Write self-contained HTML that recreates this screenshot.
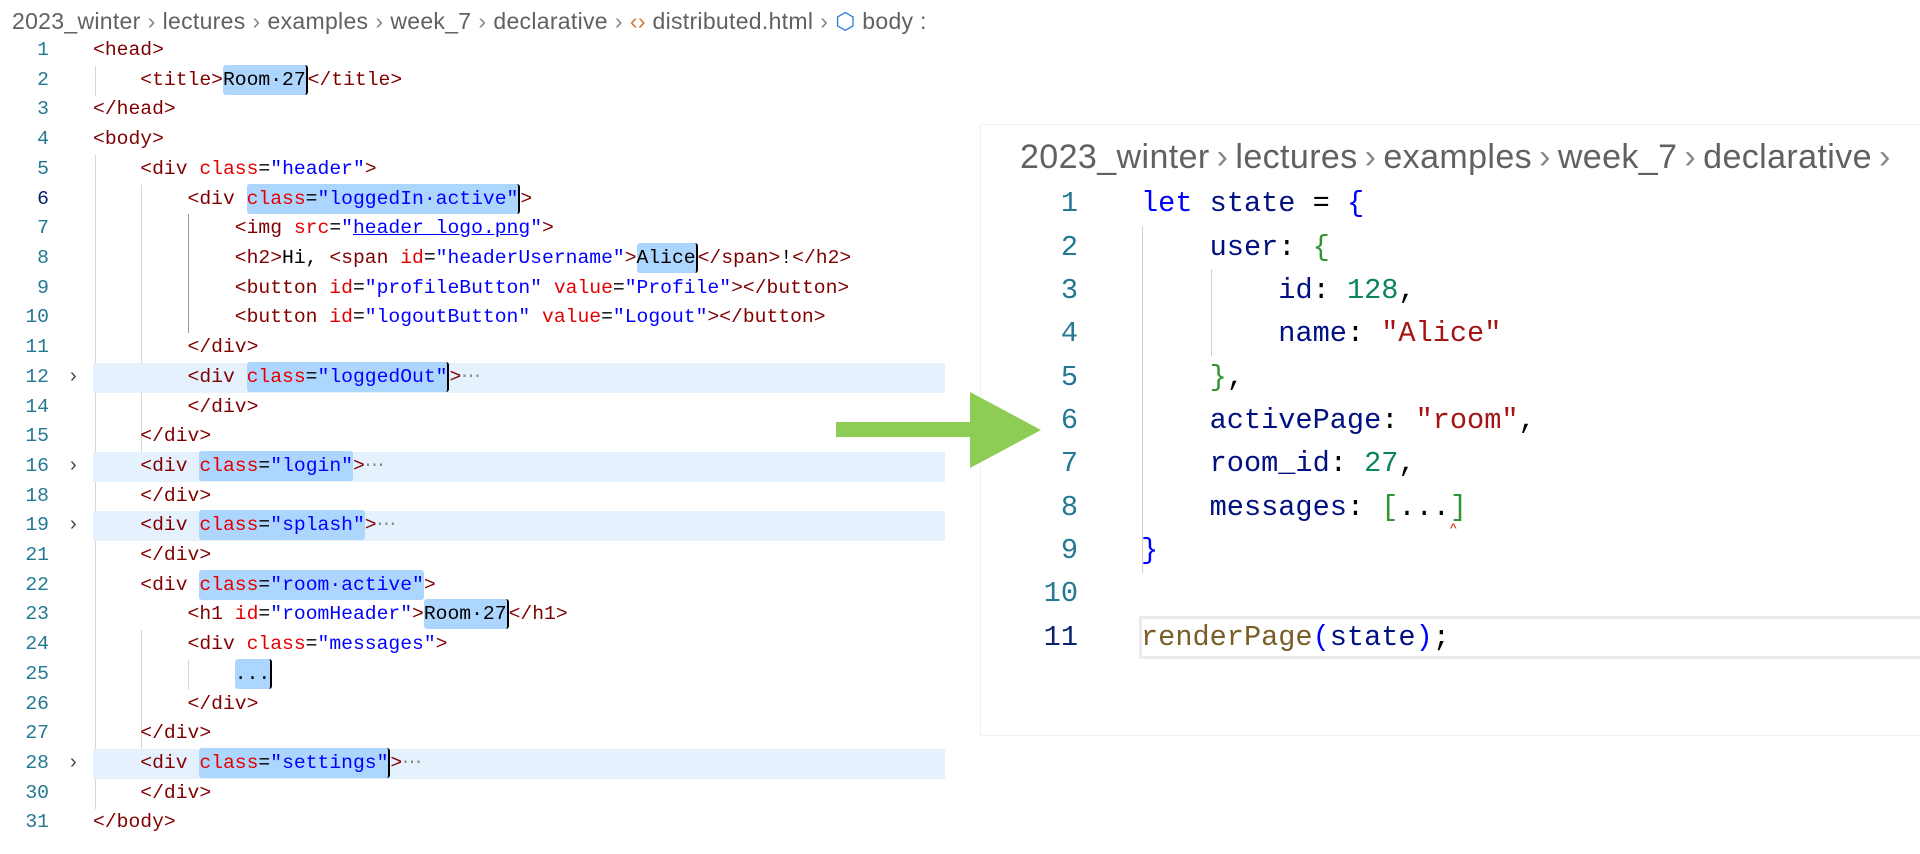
<!DOCTYPE html>
<html><head><meta charset="utf-8"><style>
*{margin:0;padding:0;box-sizing:border-box}
body{width:1920px;height:854px;background:#fff;position:relative;overflow:hidden;font-family:"Liberation Mono",monospace}
.bc{position:absolute;font-family:"Liberation Sans",sans-serif;color:#616161;white-space:nowrap}
.sep{color:#888;margin:0 7px}
.ln{position:absolute;text-align:right;color:#237893}
.row{position:absolute;white-space:pre}
.L .row{font-size:19.7px;line-height:29.7px;height:29.7px;left:93px;width:852px}
.L .ln{font-size:19.7px;line-height:29.7px;width:49px;left:0}
.t{color:#800000}.a{color:#e50000}.v{color:#0000ff}.x{color:#000}
.sel{background:#add6ff;border-radius:3px;padding:4px 0}
.fold{background:#e5f1fd}
.g{position:absolute;width:1px;background:#d6d6d6}
.chev{position:absolute;color:#444;font-family:"Liberation Sans",sans-serif;font-size:20px}
.cur{border-right:2px solid #000}
.R .row{font-size:28.6px;line-height:43.35px;height:43.35px;left:1141px}
.R .ln{font-size:28.6px;line-height:43.35px;width:100px;left:978px}
.k{color:#0000ff}.id{color:#001080}.n{color:#098658}.s{color:#a31515}.gb{color:#319331}.fn{color:#795e26}
</style></head><body>
<div class="bc" style="left:12px;top:6px;font-size:23px;line-height:30px;letter-spacing:0.3px">2023_winter<span class="sep">›</span>lectures<span class="sep">›</span>examples<span class="sep">›</span>week_7<span class="sep">›</span>declarative<span class="sep">›</span><span style="color:#d8772e">‹›</span> distributed.html<span class="sep">›</span><span style="color:#2f7bd6">⬡</span> body :</div>

<div class="L">
<div class="g" style="left:95px;top:66px;height:30px"></div>
<div class="g" style="left:95px;top:155px;height:654px"></div>
<div class="g" style="left:141px;top:185px;height:267px"></div>
<div class="g" style="left:141px;top:630px;height:119px"></div>
<div class="g" style="left:188px;top:214px;height:119px;background:#999"></div>
<div class="g" style="left:188px;top:660px;height:30px"></div>

<div class="row fold" style="top:363px"></div>
<div class="row fold" style="top:452px"></div>
<div class="row fold" style="top:511px"></div>
<div class="row fold" style="top:749px"></div>

<div class="ln" style="top:36px">1</div><div class="row" style="top:36px"><span class="t">&lt;head&gt;</span></div>
<div class="ln" style="top:66px">2</div><div class="row" style="top:66px">    <span class="t">&lt;title&gt;</span><span class="sel cur">Room·27</span><span class="t">&lt;/title&gt;</span></div>
<div class="ln" style="top:95px">3</div><div class="row" style="top:95px"><span class="t">&lt;/head&gt;</span></div>
<div class="ln" style="top:125px">4</div><div class="row" style="top:125px"><span class="t">&lt;body&gt;</span></div>
<div class="ln" style="top:155px">5</div><div class="row" style="top:155px">    <span class="t">&lt;div </span><span class="a">class</span>=<span class="v">"header"</span><span class="t">&gt;</span></div>
<div class="ln" style="top:185px;color:#0b216f">6</div><div class="row" style="top:185px">        <span class="t">&lt;div </span><span class="sel cur"><span class="a">class</span>=<span class="v">"loggedIn·active"</span></span><span class="t">&gt;</span></div>
<div class="ln" style="top:214px">7</div><div class="row" style="top:214px">            <span class="t">&lt;img </span><span class="a">src</span>=<span class="v">"<u>header_logo.png</u>"</span><span class="t">&gt;</span></div>
<div class="ln" style="top:244px">8</div><div class="row" style="top:244px">            <span class="t">&lt;h2&gt;</span>Hi, <span class="t">&lt;span </span><span class="a">id</span>=<span class="v">"headerUsername"</span><span class="t">&gt;</span><span class="sel cur">Alice</span><span class="t">&lt;/span&gt;</span>!<span class="t">&lt;/h2&gt;</span></div>
<div class="ln" style="top:274px">9</div><div class="row" style="top:274px">            <span class="t">&lt;button </span><span class="a">id</span>=<span class="v">"profileButton"</span> <span class="a">value</span>=<span class="v">"Profile"</span><span class="t">&gt;&lt;/button&gt;</span></div>
<div class="ln" style="top:303px">10</div><div class="row" style="top:303px">            <span class="t">&lt;button </span><span class="a">id</span>=<span class="v">"logoutButton"</span> <span class="a">value</span>=<span class="v">"Logout"</span><span class="t">&gt;&lt;/button&gt;</span></div>
<div class="ln" style="top:333px">11</div><div class="row" style="top:333px">        <span class="t">&lt;/div&gt;</span></div>
<div class="ln" style="top:363px">12</div><div class="chev" style="left:70px;top:365px">›</div><div class="row" style="top:363px">        <span class="t">&lt;div </span><span class="sel cur"><span class="a">class</span>=<span class="v">"loggedOut"</span></span><span class="t">&gt;</span><span style="color:#888">⋯</span></div>
<div class="ln" style="top:393px">14</div><div class="row" style="top:393px">        <span class="t">&lt;/div&gt;</span></div>
<div class="ln" style="top:422px">15</div><div class="row" style="top:422px">    <span class="t">&lt;/div&gt;</span></div>
<div class="ln" style="top:452px">16</div><div class="chev" style="left:70px;top:454px">›</div><div class="row" style="top:452px">    <span class="t">&lt;div </span><span class="sel"><span class="a">class</span>=<span class="v">"login"</span></span><span class="t">&gt;</span><span style="color:#888">⋯</span></div>
<div class="ln" style="top:482px">18</div><div class="row" style="top:482px">    <span class="t">&lt;/div&gt;</span></div>
<div class="ln" style="top:511px">19</div><div class="chev" style="left:70px;top:513px">›</div><div class="row" style="top:511px">    <span class="t">&lt;div </span><span class="sel"><span class="a">class</span>=<span class="v">"splash"</span></span><span class="t">&gt;</span><span style="color:#888">⋯</span></div>
<div class="ln" style="top:541px">21</div><div class="row" style="top:541px">    <span class="t">&lt;/div&gt;</span></div>
<div class="ln" style="top:571px">22</div><div class="row" style="top:571px">    <span class="t">&lt;div </span><span class="sel"><span class="a">class</span>=<span class="v">"room·active"</span></span><span class="t">&gt;</span></div>
<div class="ln" style="top:600px">23</div><div class="row" style="top:600px">        <span class="t">&lt;h1 </span><span class="a">id</span>=<span class="v">"roomHeader"</span><span class="t">&gt;</span><span class="sel cur">Room·27</span><span class="t">&lt;/h1&gt;</span></div>
<div class="ln" style="top:630px">24</div><div class="row" style="top:630px">        <span class="t">&lt;div </span><span class="a">class</span>=<span class="v">"messages"</span><span class="t">&gt;</span></div>
<div class="ln" style="top:660px">25</div><div class="row" style="top:660px">            <span class="sel cur">...</span></div>
<div class="ln" style="top:690px">26</div><div class="row" style="top:690px">        <span class="t">&lt;/div&gt;</span></div>
<div class="ln" style="top:719px">27</div><div class="row" style="top:719px">    <span class="t">&lt;/div&gt;</span></div>
<div class="ln" style="top:749px">28</div><div class="chev" style="left:70px;top:751px">›</div><div class="row" style="top:749px">    <span class="t">&lt;div </span><span class="sel cur"><span class="a">class</span>=<span class="v">"settings"</span></span><span class="t">&gt;</span><span style="color:#888">⋯</span></div>
<div class="ln" style="top:779px">30</div><div class="row" style="top:779px">    <span class="t">&lt;/div&gt;</span></div>
<div class="ln" style="top:808px">31</div><div class="row" style="top:808px"><span class="t">&lt;/body&gt;</span></div>
</div>

<div style="position:absolute;left:980px;top:124px;width:960px;height:612px;border:1px solid #f0f0f0;border-right:none"></div>
<div class="bc" style="left:1020px;top:136px;font-size:34px;line-height:42px;letter-spacing:0.4px">2023_winter<span class="sep">›</span>lectures<span class="sep">›</span>examples<span class="sep">›</span>week_7<span class="sep">›</span>declarative<span class="sep">›</span></div>
<div class="R">
<div class="g" style="left:1142px;top:226px;height:347px;background:#d0d0d0"></div>
<div class="g" style="left:1211px;top:269px;height:87px;background:#d0d0d0"></div>
<div style="position:absolute;left:1139px;top:616px;width:790px;height:43px;border:3px solid #ebebeb;border-right:none"></div>
<div class="ln" style="top:182px">1</div><div class="row" style="top:182px"><span class="k">let</span> <span class="id">state</span> = <span class="k">{</span></div>
<div class="ln" style="top:226px">2</div><div class="row" style="top:226px">    <span class="id">user</span>: <span class="gb">{</span></div>
<div class="ln" style="top:269px">3</div><div class="row" style="top:269px">        <span class="id">id</span>: <span class="n">128</span>,</div>
<div class="ln" style="top:312px">4</div><div class="row" style="top:312px">        <span class="id">name</span>: <span class="s">"Alice"</span></div>
<div class="ln" style="top:356px">5</div><div class="row" style="top:356px">    <span class="gb">}</span>,</div>
<div class="ln" style="top:399px">6</div><div class="row" style="top:399px">    <span class="id">activePage</span>: <span class="s">"room"</span>,</div>
<div class="ln" style="top:442px">7</div><div class="row" style="top:442px">    <span class="id">room_id</span>: <span class="n">27</span>,</div>
<div class="ln" style="top:486px">8</div><div class="row" style="top:486px">    <span class="id">messages</span>: <span class="gb">[</span>...<span class="gb">]</span></div>
<div class="ln" style="top:529px">9</div><div class="row" style="top:529px"><span class="k">}</span></div>
<div class="ln" style="top:572px">10</div>
<div class="ln" style="top:616px;color:#0b216f">11</div><div class="row" style="top:616px"><span class="fn">renderPage</span><span class="k">(</span><span class="id">state</span><span class="k">)</span>;</div>
<div style="position:absolute;left:1450px;top:520px;color:#e51400;font-size:14px;font-family:'Liberation Sans',sans-serif">^</div>
</div>

<svg style="position:absolute;left:0;top:0" width="1920" height="854">
<rect x="836" y="422" width="140" height="15" fill="#8dcc55"/>
<polygon points="970,392 1041,430 970,468" fill="#8dcc55"/>
</svg>
</body></html>
